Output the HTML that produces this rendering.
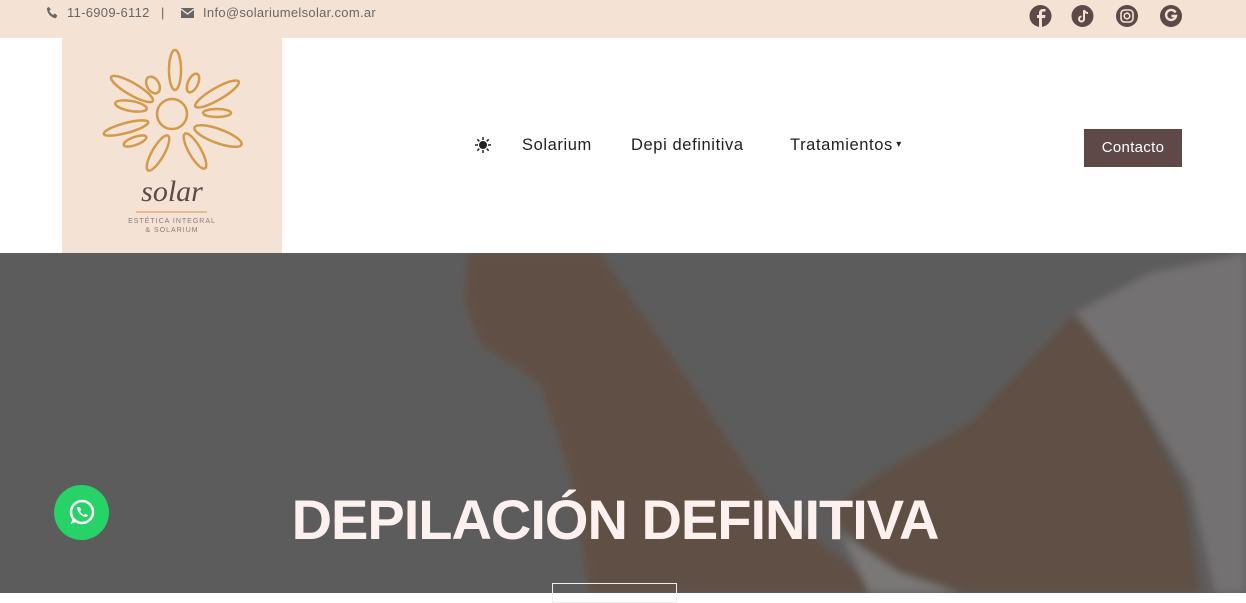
<!DOCTYPE html>
<html><head><meta charset="utf-8"><style>
*{margin:0;padding:0;box-sizing:border-box}
body{width:1246px;height:593px;overflow:hidden;font-family:"Liberation Sans",sans-serif;background:#fff;position:relative}
.top{position:absolute;left:0;top:0;width:1246px;height:38px;background:#f4e3d5}
.top .t{position:absolute;top:5px;font-size:13px;color:#666;letter-spacing:.3px}
.logo{position:absolute;left:62px;top:38px;width:220px;height:215px;background:#f4e3d5}
nav a{position:absolute;top:136px;font-size:16.5px;color:#222;letter-spacing:.6px;text-decoration:none}
.btn{position:absolute;left:1084px;top:129px;width:98px;height:38px;background:#5e4848;color:#fff;font-size:15px;text-align:center;line-height:38px;letter-spacing:.3px}
.hero{position:absolute;left:0;top:253px;width:1246px;height:340px;background:#5d5c5c;overflow:hidden}
h1{position:absolute;left:0;width:1230px;text-align:center;top:487px;font-size:56px;font-weight:bold;color:#fdf1f0;letter-spacing:-1px}
.ob{position:absolute;left:552px;top:583px;width:125px;height:20px;border:1px solid #eee}
.wa{position:absolute;left:54px;top:485px;width:55px;height:55px;border-radius:50%;background:#25d366}
</style></head><body>
<div class="top">
<svg style="position:absolute;left:46px;top:6px" width="13" height="13" viewBox="0 0 16 16"><path d="M3 1l3 3-2 2c1 2 3 4 5 5l2-2 3 3-2 3C6 14 2 10 1 3z" fill="#666"/></svg>
<span class="t" style="left:67px">11-6909-6112</span>
<span class="t" style="left:161px">|</span>
<svg style="position:absolute;left:181px;top:8px" width="13" height="10" viewBox="0 0 13 10"><rect width="13" height="10" fill="#666"/><path d="M0 1l6.5 5L13 1" stroke="#f4e3d5" fill="none" stroke-width="1.3"/></svg>
<span class="t" style="left:203px">Info@solariumelsolar.com.ar</span>
<svg style="position:absolute;left:1029px;top:4px" width="154" height="24" viewBox="0 0 154 24">
<g fill="#5e4848"><circle cx="11.5" cy="12" r="11"/><circle cx="53.5" cy="12" r="11"/><circle cx="98" cy="12" r="11"/><circle cx="142" cy="12" r="11"/></g>
<path d="M13 23V14h3l.5-3H13V9c0-1 .5-1.5 1.5-1.5H16.5V5h-2.5c-2.5 0-4 1.5-4 4v2H8v3h2v9z" fill="#f4e3d5"/>
<path d="M55 6v9a2.5 2.5 0 1 1-2.5-2.5M55 6c.5 2 2 3 4 3" stroke="#f4e3d5" stroke-width="2" fill="none"/>
<rect x="92" y="6" width="12" height="12" rx="3.5" stroke="#f4e3d5" stroke-width="1.6" fill="none"/><circle cx="98" cy="12" r="2.8" stroke="#f4e3d5" stroke-width="1.6" fill="none"/>
<path d="M146.5 8.5A5 5 0 1 0 147 12h-4.5" stroke="#f4e3d5" stroke-width="2.4" fill="none"/>
</svg>
</div>
<div class="logo">
<svg width="220" height="215" viewBox="0 0 220 215">
<g stroke="#d49a45" stroke-width="2.5" fill="none">
<circle cx="110" cy="76" r="15"/>
<ellipse cx="113" cy="32" rx="6" ry="20"/>
<ellipse cx="91" cy="47" rx="6" ry="9" transform="rotate(-30 91 47)"/>
<ellipse cx="131" cy="45" rx="5" ry="10" transform="rotate(25 131 45)"/>
<ellipse cx="70" cy="51" rx="24" ry="6" transform="rotate(30 70 51)"/>
<ellipse cx="155" cy="56" rx="25" ry="6" transform="rotate(-30 155 56)"/>
<ellipse cx="69" cy="68" rx="16" ry="5" transform="rotate(10 69 68)"/>
<ellipse cx="155" cy="75" rx="14" ry="4"/>
<ellipse cx="64" cy="90" rx="23" ry="5" transform="rotate(-15 64 90)"/>
<ellipse cx="156" cy="98" rx="25" ry="7" transform="rotate(20 156 98)"/>
<ellipse cx="73" cy="103" rx="12" ry="4" transform="rotate(-20 73 103)"/>
<ellipse cx="96" cy="115" rx="6" ry="20" transform="rotate(30 96 115)"/>
<ellipse cx="133" cy="113" rx="6" ry="20" transform="rotate(-30 133 113)"/>
</g>
<text x="110" y="163" text-anchor="middle" font-family="Liberation Serif,serif" font-style="italic" font-size="30" fill="#5e4848">solar</text>
<line x1="74" y1="174" x2="145" y2="174" stroke="#d49a45" stroke-width="1"/>
<text x="110" y="185" text-anchor="middle" font-size="7" fill="#8a7a75" letter-spacing="1">ESTÉTICA INTEGRAL</text>
<text x="110" y="194" text-anchor="middle" font-size="7" fill="#8a7a75" letter-spacing="1">&amp; SOLARIUM</text>
</svg>
</div>
<svg style="position:absolute;left:475px;top:137px" width="16" height="16" viewBox="0 0 16 16"><circle cx="8" cy="8" r="4" fill="#222"/><g stroke="#222" stroke-width="1.5"><path d="M8 0v3M8 13v3M0 8h3M13 8h3M2.3 2.3l2 2M11.7 11.7l2 2M2.3 13.7l2-2M11.7 4.3l2-2"/></g></svg>
<nav><a style="left:522px">Solarium</a><a style="left:631px">Depi definitiva</a><a style="left:790px">Tratamientos<span style="font-size:10px;position:relative;top:-3px"> ▾</span></a></nav>
<div class="btn">Contacto</div>
<div class="hero">
<svg width="1246" height="340">
<defs><filter id="b"><feGaussianBlur stdDeviation="4"/></filter></defs>
<g filter="url(#b)">
<path d="M1075 60 L1150 20 L1246 0 L1246 340 L1215 340 L1190 230 L1130 130 Z" fill="#737171"/>
<path d="M1075 60 L1130 130 L1185 240 L1200 340 L905 340 L830 260 L880 220 L970 170 Z" fill="#5e4f45"/>
<path d="M468 0 L600 0 L690 130 L770 250 L860 320 L880 340 L590 340 L570 220 L540 130 L480 90 L465 50 Z" fill="#604f44"/>
<path d="M840 280 L900 320 L960 340 L870 340 Z" fill="#7a7877"/>
</g>
</svg>
</div>
<h1>DEPILACIÓN DEFINITIVA</h1>
<div class="ob"></div>
<div class="wa"><svg width="55" height="55" viewBox="0 0 55 55"><circle cx="28" cy="27" r="11" stroke="#fff" stroke-width="2.5" fill="none"/><path d="M17 39l2-7 5 4z" fill="#fff"/><path d="M23 22c0 5 4 10 10 10l1-2-3-1-1 1c-2-1-3-2-4-4l1-1-1-3z" fill="#fff"/></svg></div>
</body></html>
